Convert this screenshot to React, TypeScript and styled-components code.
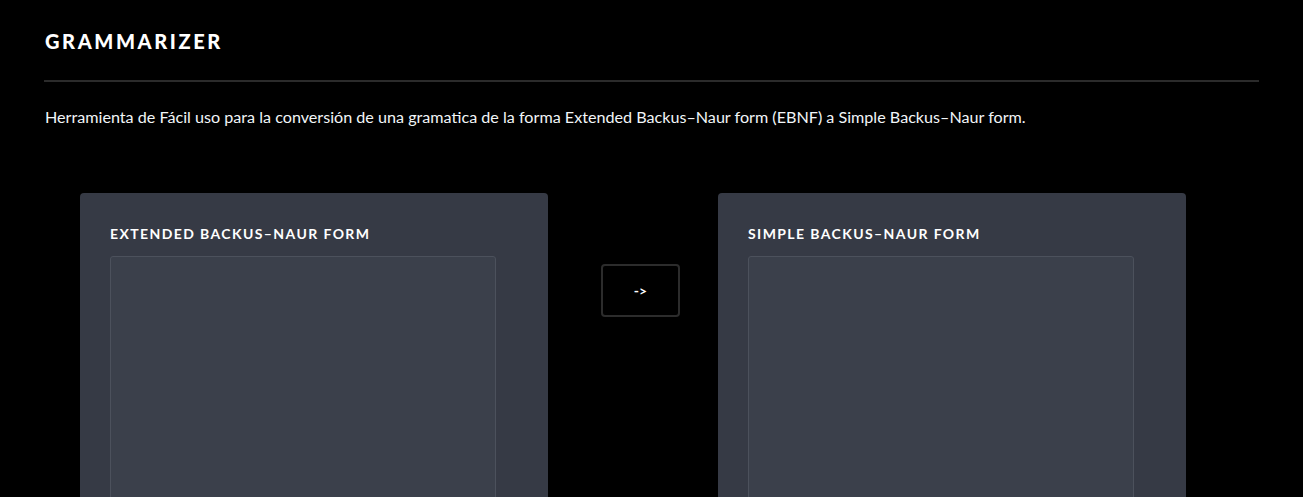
import React from "react";
import styled, { createGlobalStyle } from "styled-components";

const GlobalStyle = createGlobalStyle`
  html, body {
    margin: 0;
    padding: 0;
    background: #000;
    overflow: hidden;
  }
  body {
    font-family: "Lato", "Liberation Sans", sans-serif;
    color: #fff;
  }
`;

const Page = styled.div`
  padding: 0 44px 0 44px;
`;

const Header = styled.header`
  padding-top: 29px;
  padding-bottom: 27px;
  border-bottom: 2px solid #2b2b2b;
`;

const Brand = styled.h1`
  margin: 0 0 0 1px;
  font-family: "Lato", sans-serif;
  font-weight: 900;
  font-size: 20px;
  line-height: 24px;
  letter-spacing: 2.6px;
  color: #fff;
`;

const Intro = styled.p`
  margin: 24px 0 0 1px;
  font-size: 16.15px;
  line-height: 22px;
  color: #f2f6f8;
`;

const Workspace = styled.main`
  display: flex;
  align-items: flex-start;
  margin-top: 65px;
  padding-left: 36px;
`;

const Card = styled.section`
  width: 468px;
  height: 420px;
  box-sizing: border-box;
  padding: 32px 30px 0 30px;
  background: #363a45;
  border-radius: 4px;
`;

const CardTitle = styled.h2`
  margin: 0 0 13px 0;
  font-size: 14px;
  font-weight: 700;
  line-height: 18px;
  letter-spacing: 1.4px;
  text-transform: uppercase;
  color: #fff;
`;

const Editor = styled.textarea`
  display: block;
  width: 386px;
  height: 320px;
  box-sizing: border-box;
  margin: 0;
  padding: 8px;
  background: #3b404b;
  border: 1px solid #4c515c;
  border-radius: 3px;
  color: #fff;
  font-family: "Liberation Mono", monospace;
  font-size: 13px;
  resize: none;
  outline: none;
`;

const ConvertButton = styled.button`
  width: 79px;
  height: 53px;
  margin: 71px 38px 0 53px;
  background: #000;
  border: 2px solid #2c2c2c;
  border-radius: 4px;
  color: #fff;
  font-family: "Lato", sans-serif;
  font-weight: 700;
  font-size: 14px;
  cursor: pointer;
`;

const App = () => {
  return (
    <>
      <GlobalStyle />
      <Page>
        <Header>
          <Brand>GRAMMARIZER</Brand>
        </Header>
        <Intro>
          Herramienta de Fácil uso para la conversión de una gramatica de la forma Extended
          Backus–Naur form (EBNF) a Simple Backus–Naur form.
        </Intro>
        <Workspace>
          <Card>
            <CardTitle>Extended Backus–Naur Form</CardTitle>
            <Editor spellCheck={false} />
          </Card>
          <ConvertButton>-&gt;</ConvertButton>
          <Card>
            <CardTitle>Simple Backus–Naur Form</CardTitle>
            <Editor spellCheck={false} readOnly />
          </Card>
        </Workspace>
      </Page>
    </>
  );
};

export default App;
